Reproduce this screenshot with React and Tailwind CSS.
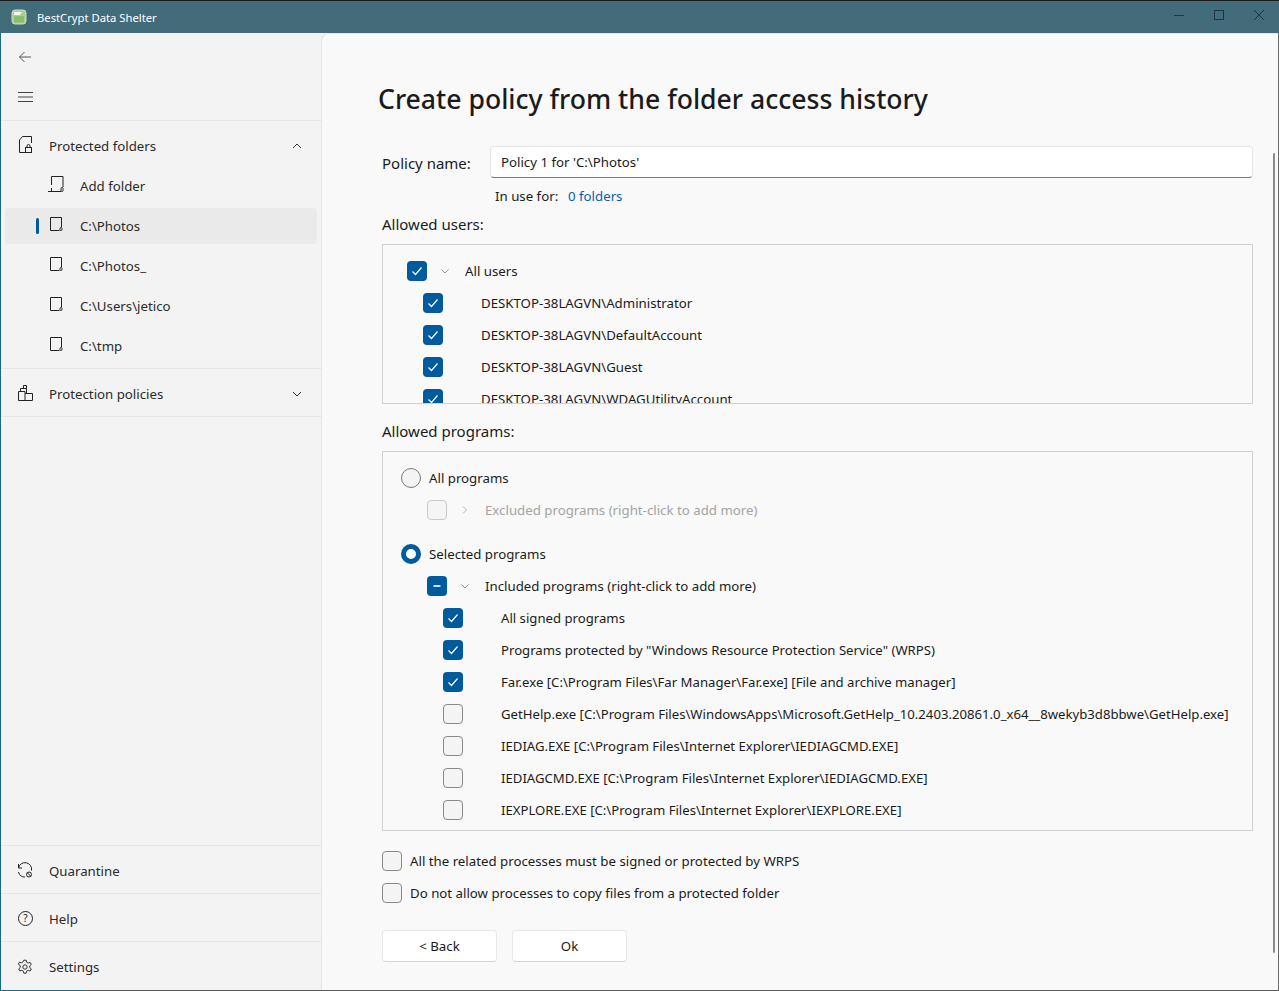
import React from 'react';

const font = "font-['Noto_Sans','Open_Sans',sans-serif]";

const programs = [
  ['All signed programs', true],
  ['Programs protected by "Windows Resource Protection Service" (WRPS)', true],
  ['Far.exe [C:\\Program Files\\Far Manager\\Far.exe] [File and archive manager]', true],
  ['GetHelp.exe [C:\\Program Files\\WindowsApps\\Microsoft.GetHelp_10.2403.20861.0_x64__8wekyb3d8bbwe\\GetHelp.exe]', false],
  ['IEDIAG.EXE [C:\\Program Files\\Internet Explorer\\IEDIAGCMD.EXE]', false],
  ['IEDIAGCMD.EXE [C:\\Program Files\\Internet Explorer\\IEDIAGCMD.EXE]', false],
  ['IEXPLORE.EXE [C:\\Program Files\\Internet Explorer\\IEXPLORE.EXE]', false],
];

const users = ['DESKTOP-38LAGVN\\Administrator', 'DESKTOP-38LAGVN\\DefaultAccount', 'DESKTOP-38LAGVN\\Guest', 'DESKTOP-38LAGVN\\WDAGUtilityAccount'];

function Svg({ size = 16, children, className = '' }) {
  return (
    <svg width={size} height={size} viewBox="0 0 16 16" fill="none" stroke="currentColor" strokeWidth="1" className={`shrink-0 ${className}`}>
      {children}
    </svg>
  );
}

function Check({ state }) {
  if (state === 'on' || state === 'mixed') {
    return (
      <span className="w-5 h-5 shrink-0 rounded-[4px] bg-[#005a9e] flex items-center justify-center">
        <svg width="12" height="12" viewBox="0 0 12 12" fill="none" stroke="white" strokeWidth="1.2">
          {state === 'on' ? <path d="M1.5 6.5 4.5 9.5 10.5 2.5" /> : <path d="M2.5 6h7" strokeWidth="1.6" />}
        </svg>
      </span>
    );
  }
  if (state === 'disabled') return <span className="w-5 h-5 shrink-0 rounded-[4px] border border-[#c9c9c9] bg-[#f5f5f5]" />;
  return <span className="w-5 h-5 shrink-0 rounded-[4px] border border-[#8a8a8a] bg-[#f4f4f4]" />;
}

function Chevron({ right, className = 'text-[#8f8f8f]' }) {
  return (
    <svg width="10" height="10" viewBox="0 0 10 10" fill="none" stroke="currentColor" className={`shrink-0 ${className}`}>
      {right ? <path d="M3 1.5 6.5 5 3 8.5" /> : <path d="M1.5 3.5 5 7 8.5 3.5" />}
    </svg>
  );
}

function FolderIcon() {
  return (
    <svg width="14" height="14" viewBox="0 0 14 14" fill="none" stroke="#222" className="shrink-0">
      <path d="M.5 13.500V.500h11V10M9.500 13.500H.500" />
      <rect x="10" y="10.500" width="2" height="3" rx="1" />
    </svg>
  );
}

function NavRow({ icon, label, chevron, tall }) {
  return (
    <div className={`${tall ? 'h-12 pt-[2px]' : 'h-[47px] pt-[3px]'} flex items-center pl-[17px] pr-[19px] shrink-0`}>
      <span className="w-[31px] flex">{icon}</span>
      <span className="flex-1 text-[#2b2b2b]">{label}</span>
      {chevron}
    </div>
  );
}

function SubRow({ label, active, icon }) {
  return (
    <div className={`relative h-9 mx-1 my-0.5 rounded-[4px] flex items-center pl-[45px] ${active ? 'bg-[#eaeaea]' : ''}`}>
      {active && <span className="absolute left-[31px] top-[10px] w-[3px] h-4 rounded-full bg-[#005a9e]" />}
      <span className="w-[30px] flex -mt-[4px]">{icon || <FolderIcon />}</span>
      <span className="text-[#2b2b2b]">{label}</span>
    </div>
  );
}

function Sidebar() {
  return (
    <aside className="w-[320px] shrink-0 bg-[#f3f3f3] flex flex-col">
      <div className="h-[88px] shrink-0 flex flex-col pl-4 pt-[16px] border-b border-[#e5e5e5]">
        <Svg className="text-[#555]">
          <path d="M14 8H2.500M7.500 3 2.500 8l5 5" />
        </Svg>
        <svg width="16" height="12" viewBox="0 0 16 12" fill="none" stroke="#444" className="mt-[26px]">
          <path d="M1 1.500h15M1 6h15M1 10.500h15" />
        </svg>
      </div>
      <NavRow
        icon={
          <svg width="16" height="18" viewBox="0 0 16 18" fill="none" stroke="#222" className="shrink-0 -mt-[2px]">
            <path d="M1.500 16.500V4l3-3.500h9V7M1.500 16.500H7" />
            <rect x="7.500" y="11.500" width="6" height="5" />
            <path d="M9 11.500V10a1.500 1.500 0 0 1 3 0v1.500" />
          </svg>
        }
        label="Protected folders"
        chevron={<svg width="10" height="10" viewBox="0 0 10 10" fill="none" stroke="#333"><path d="M1 7l4-4 4 4" /></svg>}
      />
      <div className="-mt-[2px] flex flex-col pb-[2px]">
        <SubRow
          label="Add folder"
          icon={
            <span className="-ml-[2px] flex">
              <svg width="16" height="16" viewBox="0 0 16 16" fill="none" stroke="#222" className="shrink-0">
                <path d="M3.500 9V.500h11.500V11M7 15.500h6M3.500 12v7M0 15.500h7" />
                <rect x="13" y="11.500" width="2" height="4" rx="1" />
              </svg>
            </span>
          }
        />
        <SubRow label="C:\Photos" active />
        <SubRow label="C:\Photos_" />
        <SubRow label="C:\Users\jetico" />
        <SubRow label="C:\tmp" />
      </div>
      <div className="border-t border-b border-[#e5e5e5]">
        <NavRow
          icon={
            <Svg className="text-[#222] -mt-[2px]">
              <path d="M.500 6.500h6.500v9H.500zM7 8.500h7.500v7H7M2.500 6.500v-3h6v5M5.500 3.500v-3h3v3" />
            </Svg>
          }
          label="Protection policies"
          chevron={<svg width="10" height="10" viewBox="0 0 10 10" fill="none" stroke="#333"><path d="M1 3l4 4 4-4" /></svg>}
        />
      </div>
      <div className="flex-1" />
      <div className="border-t border-[#e5e5e5]">
        <NavRow
          icon={
            <Svg className="text-[#222] -ml-px -mt-[2px]">
              <path d="M1.500 6A6.500 6.500 0 1 1 14.500 8.500M1.500 2v4h3.500M1.500 10a6.500 6.500 0 0 0 6.500 5" />
              <circle cx="12" cy="12.500" r="2.500" />
              <path d="M10.300 10.800l3.400 3.400" />
            </Svg>
          }
          label="Quarantine"
        />
      </div>
      <div className="border-t border-[#e5e5e5]">
        <NavRow
          icon={
            <span className="w-[15px] h-[15px] -mt-[2px] rounded-full border border-[#222] flex items-center justify-center text-[10px] leading-none text-[#222]">?</span>
          }
          label="Help"
        />
      </div>
      <div className="border-t border-[#e5e5e5]">
        <NavRow
          tall
          icon={
            <Svg className="text-[#333] -ml-px">
              <circle cx="8" cy="8" r="2.200" />
              <path d="M6.800 1.200h2.400l.4 2 1.600.9 1.900-.7 1.200 2.100-1.500 1.300v1.800l1.500 1.300-1.200 2.100-1.900-.7-1.600.9-.4 2H6.800l-.4-2-1.600-.9-1.900.7-1.200-2.100 1.500-1.300V6.500L1.300 5.200l1.200-2.100 1.900.7 1.600-.9z" />
            </Svg>
          }
          label="Settings"
        />
      </div>
    </aside>
  );
}

function TreeRow({ indent, children, className = '' }) {
  return <div className={`h-8 flex items-center ${indent} ${className}`}>{children}</div>;
}

export default function App() {
  return (
    <div className={`w-[1279px] h-[991px] overflow-hidden flex flex-col bg-[#f3f3f3] text-[13.25px] leading-5 text-[#1b1b1b] border-t border-[#1a1a1a] ${font}`}>
      <header className="h-8 shrink-0 bg-[#436c7b] flex items-center pl-[11px] text-white">
        <svg width="16" height="16" viewBox="0 0 16 16" className="shrink-0">
          <rect x="1" y="1" width="14" height="14" rx="3" fill="#a9cf97" stroke="#c9dcc0" />
          <path d="M3 3h8l-2 3H3z" fill="#f4f4e8" />
          <rect x="3" y="7" width="10" height="6.500" rx="1" fill="#86c06e" />
        </svg>
        <span className="ml-[10px] mt-[2px] text-[11.25px]">BestCrypt Data Shelter</span>
        <div className="flex-1" />
        <div className="flex items-center text-[#22343c] -mt-[5px]">
          <svg width="10" height="10" viewBox="0 0 10 10" stroke="currentColor" fill="none" className="mr-[30px]"><path d="M0 5.500h10" /></svg>
          <svg width="10" height="10" viewBox="0 0 10 10" stroke="currentColor" fill="none" className="mr-[30px]"><rect x="0.500" y="0.500" width="9" height="9" /></svg>
          <svg width="10" height="10" viewBox="0 0 10 10" stroke="currentColor" fill="none" className="mr-[15px]"><path d="M0 0l10 10M10 0 0 10" /></svg>
        </div>
      </header>
      <div className="flex-1 min-h-0 flex border-l border-[#1d6a85] border-r-[#6b6b6b] border-r">
        <Sidebar />
        <main className="relative flex-1 min-w-0 bg-[#f9f9f9] border-l border-t border-[#e5e5e5] rounded-tl-lg pl-[60px] pr-[25px]">
          <h1 className="text-[26.6px] leading-10 font-medium mt-[45px] -ml-[4px] text-[#1b1b1b]">Create policy from the folder access history</h1>
          <div className="mt-[27px] flex items-center">
            <label className="w-[108px] text-[15px] pt-[2px]">Policy name:</label>
            <div className="flex-1 h-8 bg-white rounded-[4px] border border-[#e5e5e5] border-b-[#777] flex items-center pl-[10px]">Policy 1 for 'C:\Photos'</div>
          </div>
          <div className="mt-2 pl-[113px] flex h-5 items-center">
            <span className="w-[73px]">In use for:</span>
            <span className="text-[#0a5cb0]">0 folders</span>
          </div>
          <div className="mt-[8px] text-[15px]">Allowed users:</div>
          <div className="mt-[10px] h-[160px] overflow-hidden border border-[#d0d0d0] pl-[24px] pt-[10px]">
            <TreeRow>
              <Check state="on" />
              <span className="w-[38px] flex pl-[13px]"><Chevron /></span>
              <span>All users</span>
            </TreeRow>
            {users.map(u => (
              <TreeRow key={u} indent="pl-4">
                <Check state="on" />
                <span className="ml-[38px]">{u}</span>
              </TreeRow>
            ))}
          </div>
          <div className="mt-[17px] text-[15px]">Allowed programs:</div>
          <div className="mt-[10px] h-[380px] overflow-hidden border border-[#d0d0d0] pl-[18px] pt-[10px]">
            <TreeRow>
              <span className="w-5 h-5 rounded-full border border-[#777] bg-[#f4f4f4]" />
              <span className="ml-2">All programs</span>
            </TreeRow>
            <TreeRow indent="pl-[26px]" className="text-[#a3a3a3]">
              <Check state="disabled" />
              <span className="w-[38px] flex pl-[13px]"><Chevron right className="text-[#b5b5b5]" /></span>
              <span>Excluded programs (right-click to add more)</span>
            </TreeRow>
            <TreeRow className="mt-3">
              <span className="w-5 h-5 rounded-full border-[5px] border-[#005a9e] bg-white" />
              <span className="ml-2">Selected programs</span>
            </TreeRow>
            <TreeRow indent="pl-[26px]">
              <Check state="mixed" />
              <span className="w-[38px] flex pl-[13px]"><Chevron /></span>
              <span>Included programs (right-click to add more)</span>
            </TreeRow>
            {programs.map(([text, on]) => (
              <TreeRow key={text} indent="pl-[42px]" className="text-[13.17px]">
                <Check state={on ? 'on' : 'off'} />
                <span className="ml-[38px] whitespace-nowrap">{text}</span>
              </TreeRow>
            ))}
          </div>
          <div className="mt-[14px]">
            <TreeRow>
              <Check state="off" />
              <span className="ml-2">All the related processes must be signed or protected by WRPS</span>
            </TreeRow>
            <TreeRow>
              <Check state="off" />
              <span className="ml-2">Do not allow processes to copy files from a protected folder</span>
            </TreeRow>
          </div>
          <div className="mt-[21px] flex gap-[15px]">
            <button className="w-[115px] h-8 bg-white rounded-[4px] border border-[#e8e8e8] border-b-[#d4d4d4]">&lt; Back</button>
            <button className="w-[115px] h-8 bg-white rounded-[4px] border border-[#e8e8e8] border-b-[#d4d4d4]">Ok</button>
          </div>
          <span className="absolute right-[3px] top-[119px] w-[2px] h-[800px] bg-[#8a8a8a] rounded-full" />
        </main>
      </div>
      <div className="h-px shrink-0 flex">
        <span className="w-[83px] bg-[#1d6a85]" />
        <span className="flex-1 bg-[#5c5c5c]" />
      </div>
    </div>
  );
}
